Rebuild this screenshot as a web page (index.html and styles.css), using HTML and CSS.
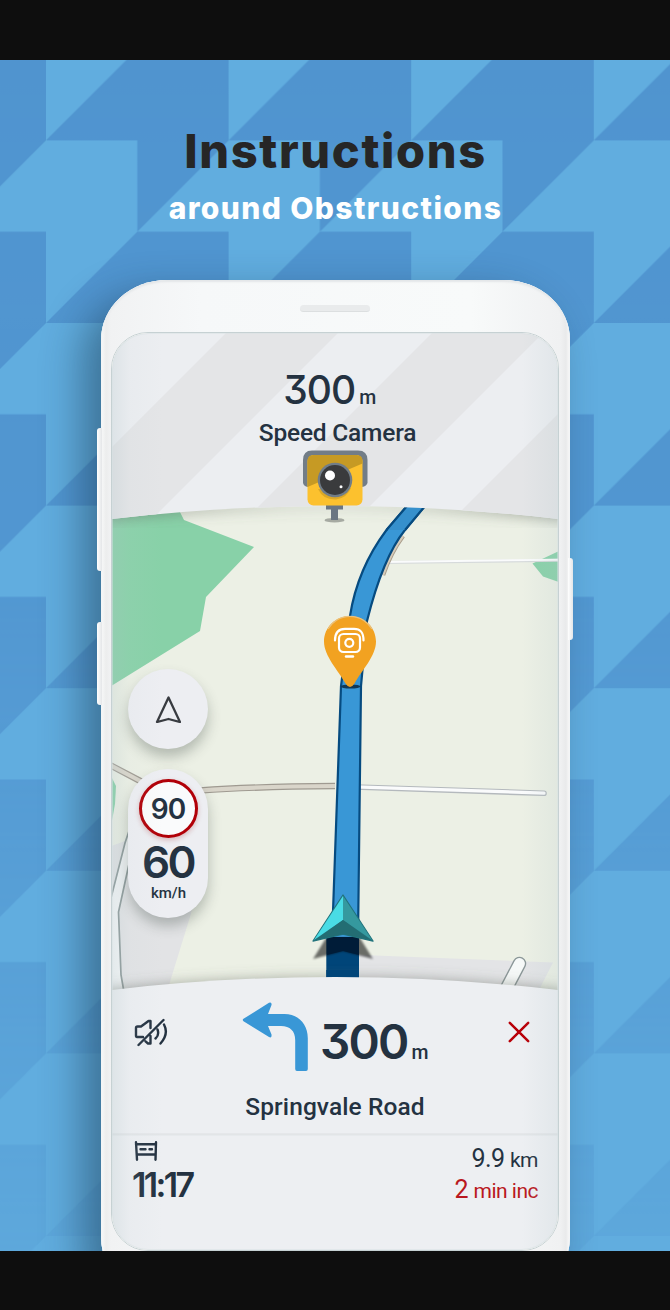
FILE: index.html
```html
<!DOCTYPE html>
<html lang="en">
<head>
<meta charset="utf-8">
<title>Instructions around Obstructions</title>
<link rel="stylesheet" href="styles.css">
</head>
<body>
<main class="poster">
  <svg class="backdrop" viewBox="0 60 670 1191" aria-hidden="true">
    <defs>
      <pattern id="tooth" x="46" y="140.4" width="182.6" height="182.6" patternUnits="userSpaceOnUse">
        <path d="M91.3 0H182.6L91.3 91.3H182.6V182.6H0L91.3 91.3Z" fill="#5094cf"/>
      </pattern>
      <linearGradient id="fade" x1="0" y1="60" x2="0" y2="1251" gradientUnits="userSpaceOnUse">
        <stop offset="0" stop-color="#fff"/><stop offset=".4" stop-color="#fff" stop-opacity=".92"/><stop offset="1" stop-color="#fff" stop-opacity=".2"/>
      </linearGradient>
      <mask id="fadeMask" maskUnits="userSpaceOnUse" x="0" y="60" width="670" height="1191"><rect y="60" width="670" height="1191" fill="url(#fade)"/></mask>
    </defs>
    <rect y="60" width="670" height="1191" fill="#61addf"/>
    <rect y="60" width="670" height="1191" fill="url(#tooth)" mask="url(#fadeMask)"/>
  </svg>

  <header class="heading">
    <h1 class="title">Instructions</h1>
    <p class="subtitle">around Obstructions</p>
  </header>

  <section class="phone">
    <i class="key key-volume"></i><i class="key key-assist"></i><i class="key key-power"></i>
    <div class="speaker"></div>
    <div class="screen">
      <svg class="scene" viewBox="112 333 446 917" preserveAspectRatio="none" aria-hidden="true">
        <defs>
          <clipPath id="topPanel"><path d="M111 332H559V519Q335 493 111 519Z"/></clipPath>
          <filter id="soft" x="-10%" y="-50%" width="120%" height="200%"><feGaussianBlur stdDeviation="7"/></filter>
          <filter id="tight" x="-20%" y="-20%" width="140%" height="140%"><feGaussianBlur stdDeviation="1.1"/></filter>
        </defs>
        <rect x="111" y="332" width="448" height="919" fill="#ecf0e5"/>
        <path d="M111 846L128 840H200V880L190 917L169 985V1000H111Z" fill="#e2e3e5"/>
        <path d="M350 954L375 955.5L553 962.5L540 988V1000H350Z" fill="#e3e4e6"/>
        <g fill="#88d1a8">
          <path d="M111 510H179L184 520L254 547L206 597L200 631L111 686Z"/>
          <path d="M559 551L532.5 563.5L543 576.5L559 582Z"/>
          <path d="M111 776L116 786L115 804L111 826Z"/>
        </g>
        <path d="M128 832L125 843L111 900V1000H124L121 975L118.500 912L128 868Z" fill="#f4f6f7"/>
        <path d="M129 831L125 843L111 898M124 992L121 975L118.500 912L129 864" fill="none" stroke="#8e9a9a" stroke-width="1.700"/>
        <g fill="none">
          <path d="M108 764L145 783.500M200 790.500Q255 786.500 335 786" stroke="#9f9a91" stroke-width="6.500"/>
          <path d="M108 764L145 783.500M200 790.500Q255 786.500 335 786" stroke="#d9d5ca" stroke-width="4.200"/>
          <path d="M355 787L544 793.300" stroke="#b4b9bd" stroke-width="5.600" stroke-linecap="round"/>
          <path d="M355 786.800L544 793.100" stroke="#fafbfc" stroke-width="3.200" stroke-linecap="round"/>
          <path d="M384 562.600L559 560.300" stroke="#d6dadb" stroke-width="3"/>
          <path d="M384 562L559 559.700" stroke="#fafbfc" stroke-width="2"/>
          <path d="M403 536Q391 552 383 575" stroke="#a89c8a" stroke-width="4.500"/>
          <path d="M403 536Q391 552 383 575" stroke="#d6cbb9" stroke-width="2.500"/>
          <path d="M519.500 963.500L503 995" stroke="#8b9798" stroke-width="13.500" stroke-linecap="round"/>
          <path d="M519.500 963.500L503 995" stroke="#f6f9f8" stroke-width="10.800" stroke-linecap="round"/>
        </g>
        <path d="M407 506L386.500 530C367 556 355 584 350 616L341 686L332 940H358L361 686L367 621C376 585 388 551 405 530L425 506Z" fill="#3997d6" stroke="#064b80" stroke-width="2.200"/>
        <rect x="326.300" y="937" width="32.700" height="49" fill="#004579"/>
        <path d="M313 959L326 938H360L373 959L343 951Z" fill="#000" fill-opacity=".55" filter="url(#tight)"/>
        <path d="M327 937H359V955L343 951L327 955Z" fill="#001c38"/>
        <path d="M343 895L313 941L343 934L373 941Z" fill="#257a82" stroke="#22747c" stroke-width="1.300" stroke-linejoin="round"/>
        <path d="M343 896V920L314 940Z" fill="#49dce5"/>
        <path d="M343 896V920L372 940Z" fill="#35999f"/>
        <path d="M343 920L315 940L343 934L371 940Z" fill="#236d73"/>
        <ellipse cx="350.500" cy="686.500" rx="10" ry="2" fill="#123a57"/>
        <path d="M350 616C335.500 616 324 627.500 324 641.500C324 656 338 670 345.500 683.500Q350 690.500 354.500 683.500C362 670 376 656 376 641.500C376 627.500 364.500 616 350 616Z" fill="#f2a221"/>
        <path d="M328 629A25.500 25.500 0 0 1 372 629" fill="none" stroke="#ebc17c" stroke-width="1.300"/>
        <g fill="none" stroke="#fff" stroke-width="2.200" stroke-linecap="round">
          <path d="M335 640.500C335 632 338.500 628.800 345 628.800H354C360.500 628.800 363.500 632 363.500 640.500"/>
          <rect x="339" y="634" width="21" height="18" rx="4.500"/><circle cx="349.300" cy="642.800" r="4"/><path d="M346 656.500H353" stroke-width="2.400"/>
        </g>
        <path d="M100 520Q335 494 570 520V505H100Z" fill="#5e685c" fill-opacity=".6" filter="url(#soft)"/>
        <path d="M98 991Q335 965 572 991V1010H98Z" fill="#60665e" fill-opacity=".55" filter="url(#soft)"/>
        <path d="M407 506L386.500 530H405L425 506Z" fill="#3690cc"/>
        <path d="M407 506L386.500 530M405 530L425 506" stroke="#064b80" stroke-width="2.200"/>
        <g clip-path="url(#topPanel)">
          <rect x="111" y="332" width="448" height="190" fill="#eceef1"/>
          <path d="M227 332H339L147 524H35ZM433 332H544L352 524H241ZM640 332H700V524H448Z" fill="#e4e5e7"/>
        </g>
        <path d="M326.300 970H359V978H326.300Z" fill="#004579"/>
        <path d="M111 990Q335 964 559 990V1251H111Z" fill="#edeff2"/>
        <path d="M111 1134.300H559" stroke="#e2e5e7" stroke-width="2.200"/>
        <ellipse cx="334.500" cy="520.200" rx="10" ry="2.300" fill="#a6aaa2"/>
        <path d="M326 504H343V509.500H338V520H331V509.500H326Z" fill="#6a7682"/>
        <path d="M303 460Q303 450.500 312 450.500H358Q367.500 450.500 367.500 460V483Q366 487 361 487H309Q304 487 303 483Z" fill="#727d87"/>
        <rect x="307.500" y="455" width="55" height="50.500" rx="6" fill="#fcc12e"/>
        <path d="M307.500 487V461Q307.500 455 313.500 455H356.500Q362.500 455 362.500 461V463.500Z" fill="#c69a24"/>
        <path d="M318 489Q323 500 336 499.500Q347 498 351 488Z" fill="#dca826"/>
        <circle cx="335" cy="480" r="17.300" fill="#717d88"/><circle cx="335" cy="480" r="15" fill="#3a3b3d"/>
        <circle cx="330" cy="475.500" r="5" fill="#fff"/><circle cx="341" cy="486.700" r="1.500" fill="#fff"/>
      </svg>

      <div class="alert">
        <p class="distance">300<small class="unit">m</small></p>
        <p class="label">Speed Camera</p>
      </div>

      <div class="controls">
        <div class="compass">
          <svg viewBox="0 0 26 28" width="26" height="28"><path d="M13.500 2.500L2 27L13.500 24L25 27Z" fill="none" stroke="#383b40" stroke-width="2.300" stroke-linejoin="round"/></svg>
        </div>
        <div class="speedometer">
          <div class="limit">90</div>
          <div class="speed">60</div>
          <div class="speed-unit">km/h</div>
        </div>
      </div>

      <div class="guidance">
        <div class="turn-row">
          <svg class="mute" viewBox="133 1017 36 32" width="36" height="32"><g fill="none" stroke="#243241" stroke-width="2.400" stroke-linecap="round" stroke-linejoin="round"><path d="M143 1037H137Q136 1037 136 1035.500V1028Q136 1026.500 137.500 1026.500H141L148.500 1021H150.500V1028M150.500 1036V1043.500H148L145.500 1041.300M138.500 1045L163.500 1020M155.500 1038.500Q159.500 1035 157.500 1029.500M160.500 1043.500Q169 1034 164 1024.500"/></g></svg>
          <svg class="turn" viewBox="242 1000 68 73" width="68" height="73"><path d="M243.500 1018.800L269 1002.800Q272 1001.800 271.500 1005L268 1014H284.500C298 1014 307.800 1024 307.800 1038V1069Q307.800 1071 306 1071H297Q295.200 1071 295.200 1069V1040C295.200 1031 290 1026 281 1026H268L271.500 1034.500Q272 1038.500 269 1037L243.500 1021.200Q242 1020 243.500 1018.800Z" fill="#3997d6"/></svg>
          <p class="turn-distance">300<small class="unit">m</small></p>
          <svg class="close" viewBox="0 0 22 22" width="22" height="22"><path d="M1.800 1.800L20.200 20.200M20.200 1.800L1.800 20.200" stroke="#b80008" stroke-width="2.500" stroke-linecap="round"/></svg>
        </div>
        <p class="road">Springvale Road</p>
        <footer class="trip">
          <div class="arrival">
            <svg viewBox="134 1141 24 20" width="24" height="20"><path d="M136 1142.200L137 1159.800M156 1142.200L155.500 1159.800M136 1144.200H156M137 1154.500H155M140.500 1149.300H145.500M149.500 1149.300H152" fill="none" stroke="#243241" stroke-width="2.400" stroke-linecap="round"/></svg>
            <p class="clock">11:17</p>
          </div>
          <div class="remaining">
            <p class="metric">9.9 <small>km</small></p>
            <p class="metric metric-late">2 <small>min inc</small></p>
          </div>
        </footer>
      </div>
      <div class="sheen"></div>
    </div>
  </section>
</main>
</body>
</html>
```

FILE: styles.css
```css
* { box-sizing: border-box; }

body {
  margin: 0;
  height: 1310px;
  padding: 60px 0 59px;
  background: #0e0e0e;
  overflow: hidden;
}

p, h1 { margin: 0; white-space: nowrap; }
svg { display: block; flex: none; }

.poster {
  position: relative;
  height: 1191px;
  overflow: hidden;
  color: #243241;
  font-family: Roboto, sans-serif;
}

.backdrop { position: absolute; inset: 0; width: 670px; height: 1191px; }

.heading {
  position: relative;
  height: 220px;
  padding-top: 61px;
  text-align: center;
  font-family: Inter, sans-serif;
}

.title { padding-left: 1px; font-size: 47px; line-height: 60px; font-weight: 800; letter-spacing: 1.650px; color: #262626; }
.subtitle { padding-left: 1px; font-size: 30px; line-height: 55px; font-weight: 800; letter-spacing: 1.400px; color: #fff; }

.phone {
  position: relative;
  width: 469px;
  height: 1017px;
  margin-left: 101px;
  padding: 25px 10px 0;
  border-radius: 66px 66px 60px 60px / 60px;
  background: linear-gradient(90deg, #f9fafa 0, #eceded 5px, #f1f2f3 10px, #f6f8f9 100px, #f8fafa 370px, #f0f1f2 459px, #e9eaeb 465px, #fbfbfb 100%);
  box-shadow: inset 0 2px 2px #e3e6e8, inset 0 0 0 1px #f8fafb, -18px 16px 42px rgba(18, 48, 70, .48);
}

.key {
  position: absolute;
  width: 5px;
  border-radius: 3px 0 0 3px;
  background: linear-gradient(90deg, #fff, #e4e6e8);
}
.key-volume { left: -4px; top: 148px; height: 143px; }
.key-assist { left: -4px; top: 342px; height: 83px; }
.key-power { right: -3px; top: 278px; height: 82px; border-radius: 0 3px 3px 0; }

.speaker {
  width: 70px;
  height: 7px;
  margin: 0 auto 20px 189px;
  border-radius: 4px;
  background: #e9ebec;
  border-bottom: 1px solid #dcdfe0;
}

.screen {
  position: relative;
  width: 448px;
  height: 919px;
  border: 1px solid #c6d1d3;
  border-radius: 37px;
  overflow: hidden;
}

.scene { position: absolute; inset: 0; width: 446px; height: 917px; }

.sheen {
  position: absolute;
  inset: 0;
  border-radius: 36px;
  background: linear-gradient(90deg, rgba(175, 195, 200, .25), rgba(190, 205, 210, .08) 18px, transparent 50px, transparent 410px, rgba(175, 195, 200, .18));
  box-shadow: inset 0 0 0 1px rgba(215, 225, 228, .5);
}

.alert, .controls, .guidance { position: relative; }

.alert { height: 336px; padding-top: 32px; text-align: center; }
.distance, .turn-distance, .limit, .speed, .clock {
  font-family: Inter, sans-serif;
  font-feature-settings: "cv09";
}
.distance { padding-right: 11px; font-size: 39px; line-height: 50px; font-weight: 500; letter-spacing: -1px; }
.unit { margin-left: 4px; font: 500 19.500px Roboto, sans-serif; letter-spacing: -.5px; }
.label { padding-left: 5px; font-size: 24.500px; line-height: 36px; font-weight: 500; letter-spacing: -.2px; }

.controls {
  display: flex;
  flex-direction: column;
  align-items: center;
  gap: 20px;
  width: 80px;
  height: 309px;
  margin-left: 16px;
}

.compass, .speedometer {
  width: 80px;
  border-radius: 40px;
  background: #edeef2;
  box-shadow: 0 8px 13px rgba(60, 70, 65, .32);
}
.compass { display: grid; place-items: center; height: 80px; flex: none; }
.speedometer { display: flex; flex-direction: column; align-items: center; height: 149px; padding-top: 10px; }

.limit {
  display: grid;
  place-items: center;
  width: 59px;
  height: 59px;
  flex: none;
  border: 3.500px solid #b10008;
  border-radius: 50%;
  background: #fafbfc;
  box-shadow: 0 2px 5px rgba(150, 20, 20, .25);
  font-size: 28px;
  font-weight: 600;
  letter-spacing: -1px;
}
.speed { margin-top: 3px; font-size: 44px; line-height: 43px; font-weight: 600; letter-spacing: -2.500px; }
.speed-unit { padding-left: 1px; font-size: 15px; line-height: 18px; font-weight: 500; }

.guidance { display: flex; flex-direction: column; height: 272px; padding-top: 22px; }
.turn-row { display: flex; align-items: flex-start; height: 80px; }
.mute { margin: 17px 0 0 21px; }
.turn { margin-left: 73px; }
.turn-distance { width: 190px; padding-left: 10px; font-size: 47.500px; line-height: 83px; font-weight: 600; letter-spacing: -1.800px; }
.turn-distance .unit { letter-spacing: -.5px; }
.close { margin: 21px 0 0 8px; }
.road { height: 54px; line-height: 53px; text-align: center; font-size: 24.500px; font-weight: 500; letter-spacing: .1px; }

.trip { display: flex; justify-content: space-between; padding: 7px 20px 0 20px; }
.arrival { padding-left: 2px; }
.clock { margin-left: -2px; font-size: 34px; line-height: 47px; font-weight: 600; letter-spacing: -2.600px; }
.remaining { padding-top: 3px; text-align: right; }
.metric { font-size: 25px; line-height: 30px; letter-spacing: -.6px; }
.metric small { font-size: 21px; letter-spacing: -.5px; }
.metric-late { color: #b91820; }
```
